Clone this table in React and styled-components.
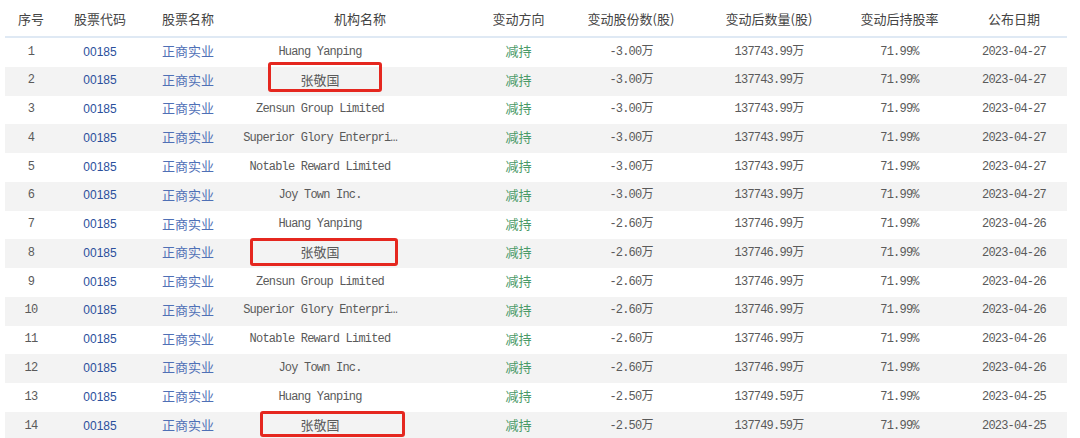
import React from "react";
import styled, { createGlobalStyle } from "styled-components";

const GlobalStyle = createGlobalStyle`
  html, body { margin: 0; padding: 0; background: #ffffff; }
  body { font-family: "Noto Sans CJK SC", "Liberation Sans", sans-serif; }
`;

const COLS = "52px 86px 90px 242px 87px 138px 138px 123px 106px";

const Table = styled.div`
  width: 1062px;
  margin-left: 5px;
`;

const HeaderRow = styled.div`
  display: grid;
  grid-template-columns: ${COLS};
  height: 36px;
  border-bottom: 2px solid #dfe9f4;
`;

const HeadCell = styled.div`
  display: flex;
  align-items: center;
  justify-content: center;
  padding-top: 2px;
  padding-left: ${(p) => p.$shift || 0}px;
  font-family: "Noto Sans CJK SC", sans-serif;
  font-size: 13px;
  line-height: 1.3;
  color: #444444;
  white-space: nowrap;
`;

const Row = styled.div`
  display: grid;
  grid-template-columns: ${COLS};
  height: 28.77px;
  background: ${(p) => (p.$striped ? "#f3f3f3" : "#ffffff")};
`;

const toneColor = {
  plain: "#5a5a5a",
  code: "#2b4f9c",
  stock: "#4f70b6",
  down: "#4a9a68",
};

const Cell = styled.div`
  position: relative;
  display: flex;
  align-items: center;
  justify-content: ${(p) => (p.$start ? "flex-start" : "center")};
  padding-left: ${(p) => p.$pad || 0}px;
  padding-bottom: ${(p) => (p.$kind === "cjk" ? "2px" : "0")};
  line-height: 1.3;
  white-space: nowrap;
  color: ${(p) => toneColor[p.$tone || "plain"]};
  font-size: ${(p) => (p.$kind === "cjk" ? "13px" : "12px")};
  letter-spacing: ${(p) => (p.$kind === "mono" ? "-0.8px" : "0")};
  font-family: ${(p) =>
    p.$kind === "code"
      ? '"Liberation Sans", sans-serif'
      : p.$kind === "cjk"
      ? '"Noto Sans CJK SC", sans-serif'
      : '"Liberation Mono", "Noto Sans CJK SC", monospace'};
`;

const NameText = styled.span`
  display: block;
  width: 158px;
  white-space: nowrap;
  text-align: center;
`;

const Highlight = styled.div`
  position: absolute;
  left: ${(p) => p.$left}px;
  top: ${(p) => p.$top}px;
  width: ${(p) => p.$w}px;
  height: ${(p) => p.$h}px;
  border: 3px solid #e5271f;
  border-radius: 3px;
  box-sizing: border-box;
  pointer-events: none;
`;

const headers = [
  "序号",
  "股票代码",
  "股票名称",
  "机构名称",
  "变动方向",
  "变动股份数(股)",
  "变动后数量(股)",
  "变动后持股率",
  "公布日期",
];

const names = [
  "Huang Yanping",
  "张敬国",
  "Zensun Group Limited",
  "Superior Glory Enterpri…",
  "Notable Reward Limited",
  "Joy Town Inc.",
];

const groups = [
  { change: "-3.00万", after: "137743.99万", date: "2023-04-27", count: 6 },
  { change: "-2.60万", after: "137746.99万", date: "2023-04-26", count: 6 },
  { change: "-2.50万", after: "137749.59万", date: "2023-04-25", count: 2 },
];

const boxes = {
  2: { left: 35, top: -5, w: 114, h: 30 },
  8: { left: 17, top: -1, w: 148, h: 28 },
  14: { left: 27, top: -1, w: 145, h: 26 },
};

const rows = [];
groups.forEach((g) => {
  for (let i = 0; i < g.count; i++) {
    rows.push({
      idx: rows.length + 1,
      name: names[i],
      change: g.change,
      after: g.after,
      date: g.date,
    });
  }
});

export default function App() {
  return (
    <>
      <GlobalStyle />
      <Table>
        <HeaderRow>
          {headers.map((h, i) => (
            <HeadCell key={h} $shift={i === 3 ? 12 : 0}>
              {h}
            </HeadCell>
          ))}
        </HeaderRow>
        {rows.map((r) => {
          const box = boxes[r.idx];
          const isCjk = /[\u4e00-\u9fa5]/.test(r.name);
          return (
            <Row key={r.idx} $striped={r.idx % 2 === 0}>
              <Cell $kind="mono">{r.idx}</Cell>
              <Cell $kind="code" $tone="code">00185</Cell>
              <Cell $kind="cjk" $tone="stock">正商实业</Cell>
              <Cell $kind={isCjk ? "cjk" : "mono"} $start $pad={8}>
                <NameText>{r.name}</NameText>
                {box && (
                  <Highlight $left={box.left} $top={box.top} $w={box.w} $h={box.h} />
                )}
              </Cell>
              <Cell $kind="cjk" $tone="down">减持</Cell>
              <Cell $kind="mono">{r.change}</Cell>
              <Cell $kind="mono">{r.after}</Cell>
              <Cell $kind="mono">71.99%</Cell>
              <Cell $kind="mono">{r.date}</Cell>
            </Row>
          );
        })}
      </Table>
    </>
  );
}
